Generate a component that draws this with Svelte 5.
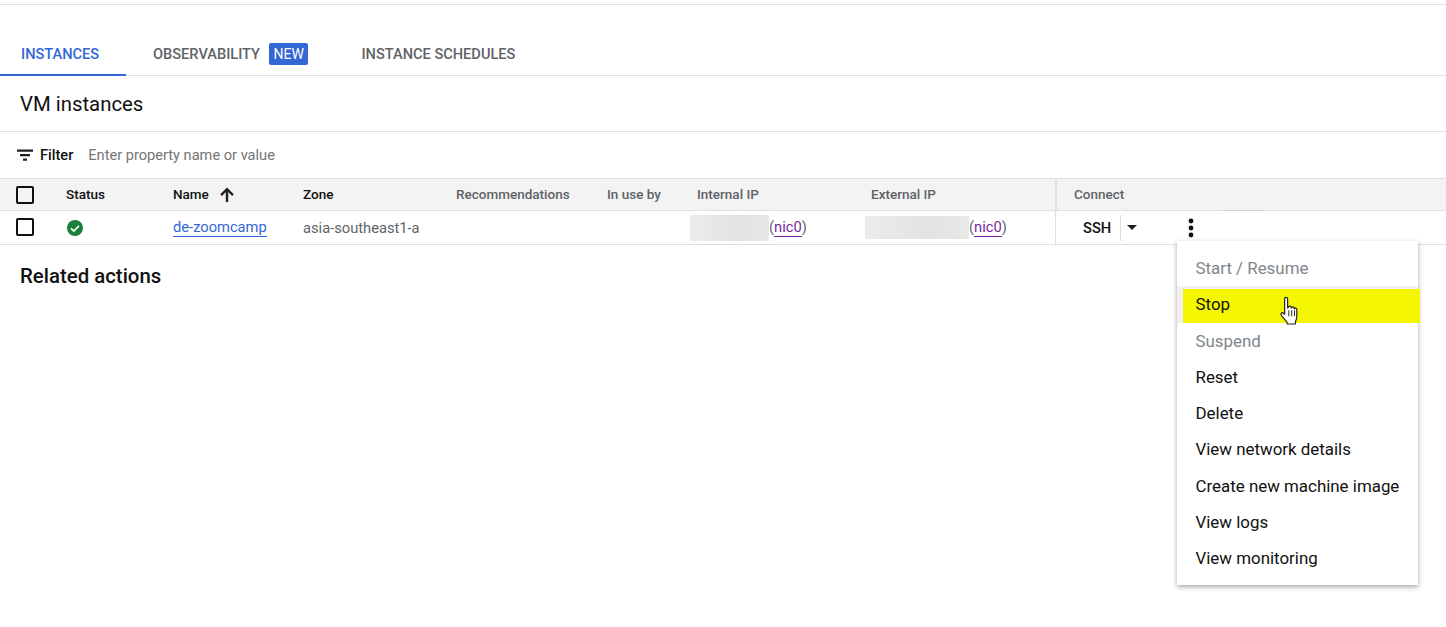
<script lang="ts">
  const HEADERS = [
    { label: "Status", strong: true },
    { label: "Name", strong: true, sorted: true },
    { label: "Zone", strong: true },
    { label: "Recommendations" },
    { label: "In use by" },
    { label: "Internal IP" },
    { label: "External IP" },
  ];

  const MENU = [
    { label: "Start / Resume", disabled: true },
    { label: "Stop", hover: true },
    { label: "Suspend", disabled: true },
    { label: "Reset" },
    { label: "Delete" },
    { label: "View network details" },
    { label: "Create new machine image" },
    { label: "View logs" },
    { label: "View monitoring" },
  ];
</script>

<div class="page">
  <nav class="tabs">
    <div class="tab active">INSTANCES</div>
    <div class="tab">OBSERVABILITY <span class="new">NEW</span></div>
    <div class="tab">INSTANCE SCHEDULES</div>
  </nav>

  <h1 class="title">VM instances</h1>

  <div class="filter">
    <svg width="18" height="18" viewBox="0 0 18 18" aria-hidden="true">
      <path d="M1 3.500h16v2.200H1zM4 8h10v2.200H4zM7 12.500h4v2.200H7z" fill="#202124" />
    </svg>
    <b>Filter</b>
    <span class="placeholder">Enter property name or value</span>
  </div>

  <div class="row head">
    <div class="cell check"><span class="box"></span></div>
    {#each HEADERS as h}
      <div class="cell" class:strong={h.strong}>
        {h.label}
        {#if h.sorted}
          <svg class="arrow" width="16" height="16" viewBox="0 0 16 16" aria-hidden="true">
            <path d="M6.800 15V5L2.900 8.900 1.200 7.200 8 .6l6.800 6.600-1.700 1.700L9.200 5v10z" fill="#202124" />
          </svg>
        {/if}
      </div>
    {/each}
    <div class="cell connect">Connect</div>
  </div>

  <div class="row body">
    <div class="cell check"><span class="box"></span></div>
    <div class="cell">
      <svg width="18" height="18" viewBox="0 0 18 18" aria-hidden="true">
        <circle cx="9" cy="9" r="8" fill="#188038" />
        <path d="M5 9.300l2.800 2.800L13 6.900" fill="none" stroke="#fff" stroke-width="1.700" />
      </svg>
    </div>
    <div class="cell"><a href="#top" class="link">de-zoomcamp</a></div>
    <div class="cell zone">asia-southeast1-a</div>
    <div class="cell"></div>
    <div class="cell"></div>
    <div class="cell ip internal">
      <span class="blur"></span><span class="nic">(<a href="#top">nic0</a>)</span>
    </div>
    <div class="cell ip external">
      <span class="blur"></span><span class="nic">(<a href="#top">nic0</a>)</span>
    </div>
    <div class="cell connect actions">
      <span class="ssh">SSH</span>
      <span class="caret"></span>
      <svg class="more" width="6" height="20" viewBox="0 0 6 20" aria-hidden="true">
        <circle cx="3" cy="3" r="2.400" fill="#111" />
        <circle cx="3" cy="10" r="2.400" fill="#111" />
        <circle cx="3" cy="17" r="2.400" fill="#111" />
      </svg>
    </div>
  </div>

  <h2 class="related">Related actions</h2>

  <span class="scroll-edge"></span>

  <ul class="menu">
    {#each MENU as item}
      <li class:disabled={item.disabled} class:hover={item.hover}>{item.label}</li>
    {/each}
  </ul>
  <div class="marker">
    <span>Stop</span>
    <svg width="24" height="31" viewBox="0 0 20 26" aria-hidden="true">
      <path
        d="M5.500 2.500c0-1.700 2.500-1.700 2.500 0V10l.6-.3c0-1.600 2.300-1.600 2.400 0l.2.400c.2-1.300 2.200-1.200 2.300.2l.2.500c.4-1 2-.8 2 .6v6.100c0 1.600-.5 2.600-1 3.700l-.2 2.300H7.800l-.4-1.600C6 20 4.500 18.400 2.800 16.300c-1.100-1.300.2-2.800 1.500-2l1.200 1z"
        fill="#fff"
        stroke="#222"
        stroke-width="1"
        stroke-linejoin="round"
      />
      <path d="M9 12v5M11.400 12v5M13.800 12v5" stroke="#222" stroke-width="0.800" fill="none" />
    </svg>
  </div>
</div>

<style>
  :global(body) {
    margin: 0;
    background: #fff;
  }
  .page {
    position: relative;
    height: 627px;
    overflow: hidden;
    padding-top: 4px;
    box-sizing: border-box;
    font-family: Roboto, "Liberation Sans", sans-serif;
    font-size: 14.7px;
    color: #202124;
  }
  .tabs {
    display: flex;
    height: 70px;
    align-items: flex-end;
    border-top: 1px solid #e0e0e0;
    border-bottom: 1px solid #e0e0e0;
  }
  .tab {
    height: 44px;
    box-sizing: border-box;
    padding: 0 27px;
    font-size: 14.6px;
    font-weight: 500;
    color: #5f6368;
    display: flex;
    align-items: center;
    margin-bottom: -1px;
    white-space: nowrap;
  }
  .tab:last-child {
    padding-left: 26px;
  }
  .tab.active {
    color: #3367d6;
    padding: 2px 0 0 21px;
    border-bottom: 2px solid #3367d6;
    width: 126px;
  }
  .new {
    background: #3367d6;
    color: #fff;
    font-weight: 400;
    border-radius: 2px;
    padding: 0 4.500px;
    height: 22px;
    line-height: 23px;
    margin-left: 9px;
    font-size: 14px;
  }
  .title {
    margin: 0;
    height: 55px;
    line-height: 56px;
    padding-left: 20px;
    font-size: 20.350px;
    font-weight: 400;
    color: #111;
    border-bottom: 1px solid #e0e0e0;
  }
  .filter {
    height: 46px;
    display: flex;
    align-items: center;
    padding-left: 16px;
    gap: 6px;
    font-size: 14.6px;
  }
  .filter b {
    font-weight: 500;
    color: #111;
  }
  .placeholder {
    margin-left: 9px;
    color: #757575;
  }
  .row {
    display: grid;
    grid-template-columns: 66px 107px 130px 153px 151px 90px 174px 184px 1fr;
    align-items: center;
    box-sizing: border-box;
  }
  .head {
    height: 33px;
    background: #f3f3f3;
    border-top: 1px solid #e0e0e0;
    border-bottom: 1px solid #e0e0e0;
    font-size: 13.500px;
    font-weight: 500;
    color: #5f6368;
    line-height: 15px;
  }
  .body {
    height: 34px;
    border-bottom: 1px solid #e0e0e0;
  }
  .cell {
    display: flex;
    align-items: center;
    height: 100%;
  }
  .strong {
    color: #111;
  }
  .arrow {
    margin-left: 10px;
  }
  .check {
    padding-left: 16px;
  }
  .body .check {
    margin-top: -1px;
  }
  .box {
    width: 14px;
    height: 14px;
    border: 2px solid #111;
    border-radius: 2px;
    display: block;
  }
  .link {
    color: #3367d6;
    text-decoration: none;
    border-bottom: 1px solid #3367d6;
    line-height: 17px;
  }
  .zone {
    color: #5f6368;
  }
  .ip {
    margin-left: -7px;
  }
  .ip.external {
    margin-left: -6px;
  }
  .blur {
    display: block;
    height: 26px;
    background: linear-gradient(90deg, #ececec, #e2e2e2 60%, #e8e8e8);
  }
  .internal .blur {
    width: 79px;
  }
  .external .blur {
    width: 104px;
    height: 23px;
  }
  .nic {
    color: #5f6368;
  }
  .nic a {
    color: #7b1fa2;
    text-decoration: none;
    border-bottom: 1px solid #7b1fa2;
    line-height: 17px;
    display: inline-block;
  }
  .connect {
    border-left: 2px solid #e0e0e0;
    padding-left: 17px;
  }
  .actions {
    border-left-width: 1px;
    padding-left: 19px;
  }
  .ssh {
    padding: 0 9px 0 8px;
    font-weight: 500;
    color: #111;
    border-right: 1px solid #dadce0;
    height: 26px;
    line-height: 26px;
    box-sizing: border-box;
  }
  .caret {
    margin-left: 6px;
    width: 0;
    height: 0;
    border: 5px solid transparent;
    border-top-color: #202124;
    border-bottom-width: 0;
  }
  .more {
    margin-left: 51px;
  }
  .related {
    margin: 0;
    padding: 19px 0 0 20px;
    font-size: 20.400px;
    line-height: 24px;
    font-weight: 500;
    color: #111;
  }
  .scroll-edge {
    position: absolute;
    left: 1223px;
    top: 210px;
    width: 41px;
    height: 1px;
    background: #d0d0d0;
  }
  .menu {
    position: absolute;
    left: 1177px;
    top: 241px;
    width: 241px;
    height: 344px;
    box-sizing: border-box;
    margin: 0;
    padding: 9px 0 0;
    list-style: none;
    background: #fff;
    box-shadow: 0 2px 5px rgba(0, 0, 0, 0.35);
    font-size: 16.900px;
    color: #111;
  }
  .menu li {
    height: 36.250px;
    line-height: 36px;
    padding-left: 18.500px;
    white-space: nowrap;
  }
  .menu li.disabled {
    color: #80868b;
  }
  .menu li.hover {
    background: #f1f1f1;
  }
  .marker {
    position: absolute;
    left: 1183px;
    top: 289px;
    width: 237px;
    height: 34px;
    background: #f5f700;
    font-size: 16.900px;
    color: #111;
    line-height: 31px;
    padding-left: 12.500px;
    box-sizing: border-box;
  }
  .marker svg {
    position: absolute;
    left: 95px;
    top: 7px;
  }
</style>
